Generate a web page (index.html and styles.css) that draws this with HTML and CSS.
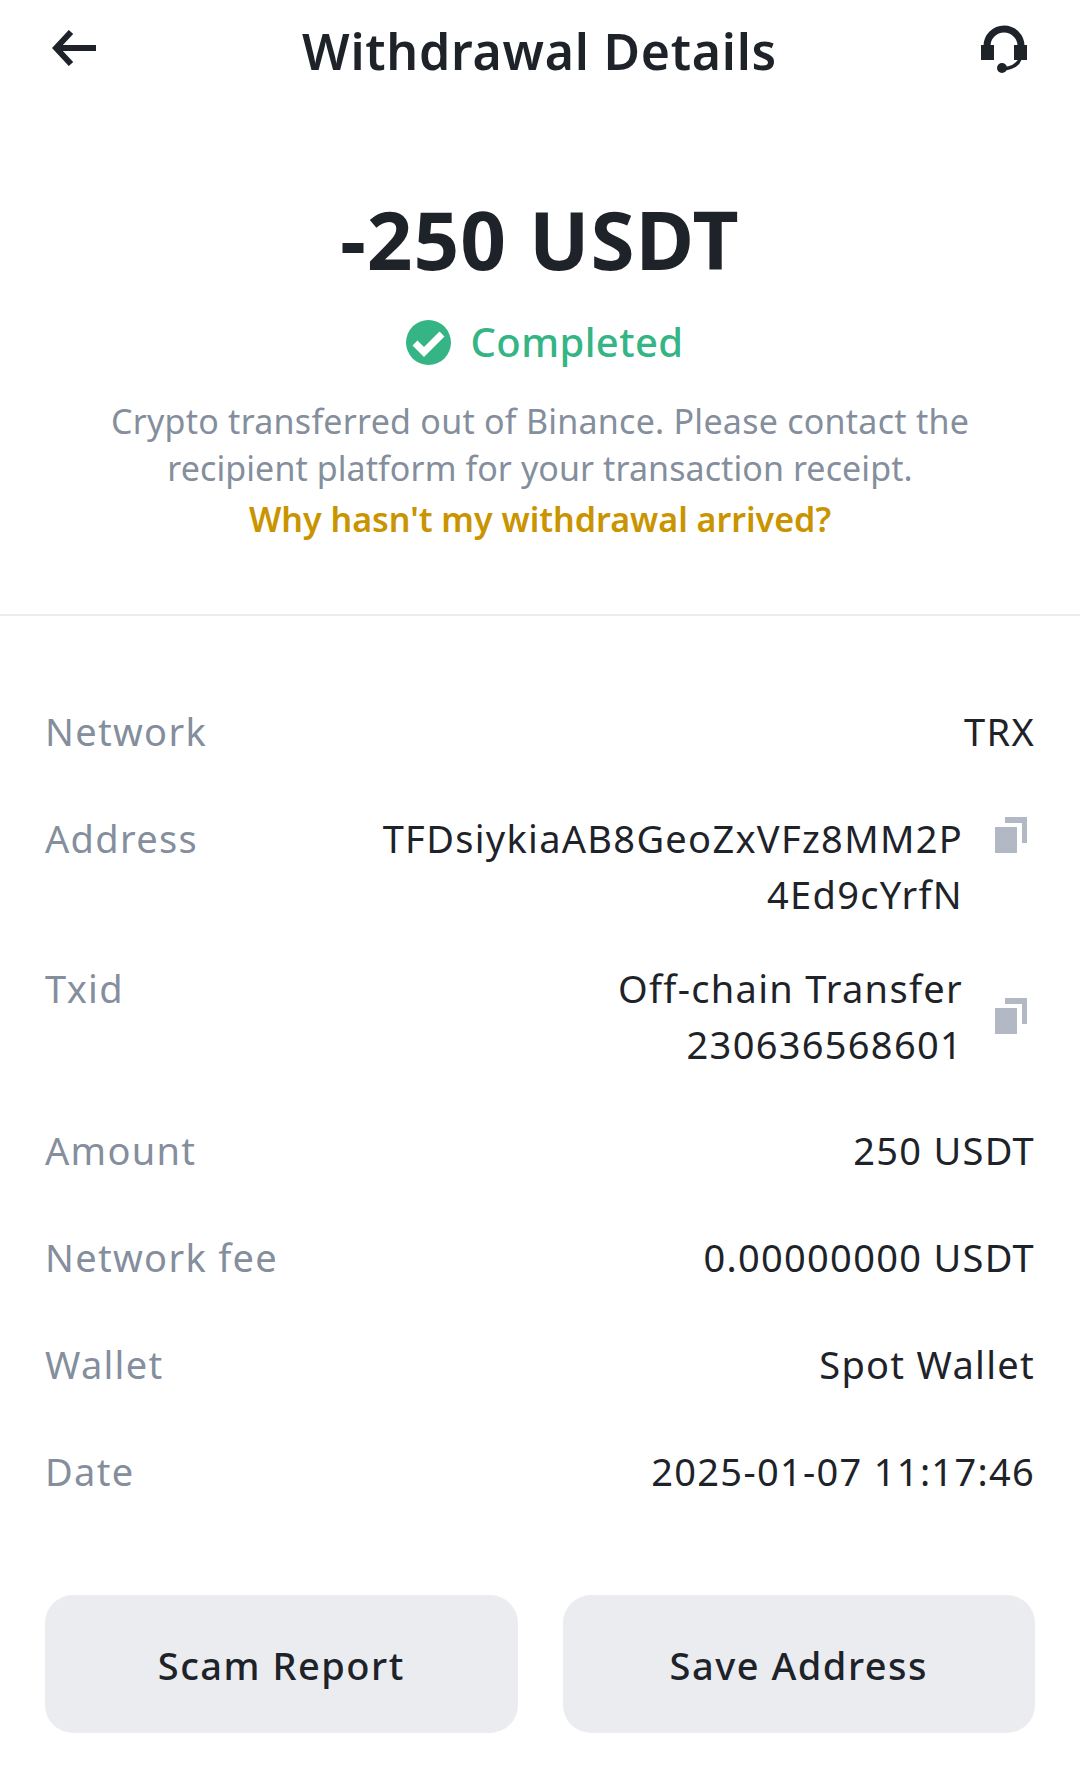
FILE: index.html
```html
<!DOCTYPE html>
<html lang="en">
<head>
    <meta charset="UTF-8">
    <meta name="viewport" content="width=device-width, initial-scale=1.0">
    <title>Withdrawal Details</title>
    <link rel="stylesheet" href="styles.css">
</head>
<body>
    <div class="navbar">
        <svg class="nav-back" width="46" height="36" viewBox="0 0 46 36"><path d="M19 2 4 18l15 16M5 18h39" fill="none" stroke="#1e2329" stroke-width="6"/></svg>
        <div class="nav-title">Withdrawal Details</div>
        <svg class="nav-help" width="46" height="48" viewBox="0 0 46 48"><path d="M6 24v-3a17 17 0 0 1 34 0v3" fill="none" stroke="#1e2329" stroke-width="7"/><path d="M0 20h13v15H0zM33 20h13v15H33z" fill="#1e2329"/><path d="M39 34c-2 6-8 9-17 10" fill="none" stroke="#1e2329" stroke-width="3.500"/><circle cx="21" cy="43" r="5" fill="#1e2329"/></svg>
    </div>
    <div class="summary">
        <div class="amount">-250 USDT</div>
        <div class="status">
            <svg width="45" height="45" viewBox="0 0 45 45"><circle cx="22.500" cy="22.500" r="22.500" fill="#35b585"/><path d="M9 23l9 9 18-18" fill="none" stroke="#fff" stroke-width="7"/></svg>
            <span>Completed</span>
        </div>
        <p class="note">Crypto transferred out of Binance. Please contact the<br><span class="note-second">recipient platform for your transaction receipt.</span></p>
        <a class="why-link" href="#">Why hasn't my withdrawal arrived?</a>
    </div>
    <div class="details">
        <div class="row">
            <div class="label">Network</div>
            <div class="value">TRX</div>
        </div>
        <div class="row row-tight">
            <div class="label">Address</div>
            <div class="value-copy">
                <div class="value">TFDsiykiaAB8GeoZxVFz8MM2P<br>4Ed9cYrfN</div>
                <svg class="copy" width="32" height="36" viewBox="0 0 32 36"><path d="M10 0h22v26h-5V6H10z" fill="#b2b9c5"/><path d="M0 10h22v26H0z" fill="#b2b9c5"/></svg>
            </div>
        </div>
        <div class="row row-double">
            <div class="label">Txid</div>
            <div class="value-copy">
                <div class="value">Off-chain Transfer<br>230636568601</div>
                <svg class="copy copy-mid" width="32" height="36" viewBox="0 0 32 36"><path d="M10 0h22v26h-5V6H10z" fill="#b2b9c5"/><path d="M0 10h22v26H0z" fill="#b2b9c5"/></svg>
            </div>
        </div>
        <div class="row">
            <div class="label">Amount</div>
            <div class="value">250 USDT</div>
        </div>
        <div class="row">
            <div class="label">Network fee</div>
            <div class="value">0.00000000 USDT</div>
        </div>
        <div class="row">
            <div class="label">Wallet</div>
            <div class="value">Spot Wallet</div>
        </div>
        <div class="row">
            <div class="label">Date</div>
            <div class="value">2025-01-07 11:17:46</div>
        </div>
    </div>
    <div class="actions">
        <button class="btn">Scam Report</button>
        <button class="btn">Save Address</button>
    </div>
</body>
</html>
```

FILE: styles.css
```css
body {
    font-family: "Noto Sans", Roboto, sans-serif;
    margin: 0;
    padding: 0;
    background-color: #ffffff;
    color: #1e2329;
}
.navbar {
    display: flex;
    align-items: center;
    justify-content: space-between;
    height: 104px;
    padding: 0 53px 0 52px;
}
.nav-back {
    margin-bottom: 8px;
}
.nav-help {
    margin-bottom: 6px;
}
.nav-title {
    font-size: 50px;
    font-weight: 600;
    letter-spacing: 0.75px;
    margin-bottom: 2px;
}
.summary {
    height: 512px;
    box-sizing: border-box;
    padding-top: 85px;
    text-align: center;
    border-bottom: 2px solid #eaecef;
}
.amount {
    font-size: 80px;
    font-weight: 700;
    line-height: 100px;
    letter-spacing: 1px;
}
.status {
    display: flex;
    align-items: center;
    justify-content: center;
    gap: 20px;
    margin-top: 23px;
    padding-left: 9px;
    font-size: 40px;
    font-weight: 500;
    line-height: 60px;
    letter-spacing: 0.4px;
    color: #35b585;
}
.note {
    margin: 26px 0 0;
    font-size: 34px;
    line-height: 47px;
    letter-spacing: 0.25px;
    color: #848e9c;
}
.note-second {
    letter-spacing: 0.08px;
}
.why-link {
    display: block;
    margin-top: 2px;
    font-size: 34px;
    font-weight: 600;
    line-height: 50px;
    color: #c99400;
    text-decoration: none;
}
.details {
    padding: 87px 45px 0;
}
.row {
    display: flex;
    justify-content: space-between;
    margin-bottom: 51px;
    font-size: 38px;
    line-height: 56px;
    letter-spacing: 1.3px;
}
.row-tight {
    margin-bottom: 38px;
}
.row-double {
    margin-bottom: 50px;
}
.label {
    color: #848e9c;
}
.value {
    text-align: right;
}
.value-copy {
    display: flex;
    align-items: flex-start;
}
.copy {
    margin: 7px 8px 0 32px;
}
.copy-mid {
    margin-top: 0;
    align-self: center;
}
.actions {
    display: flex;
    gap: 45px;
    padding: 0 45px;
    margin-top: 96px;
}
.btn {
    flex: 1;
    height: 138px;
    padding-top: 3px;
    border: none;
    border-radius: 28px;
    background-color: #eaecef;
    color: #1e2329;
    font-family: inherit;
    font-size: 38px;
    font-weight: 500;
    letter-spacing: 1.5px;
}
```
